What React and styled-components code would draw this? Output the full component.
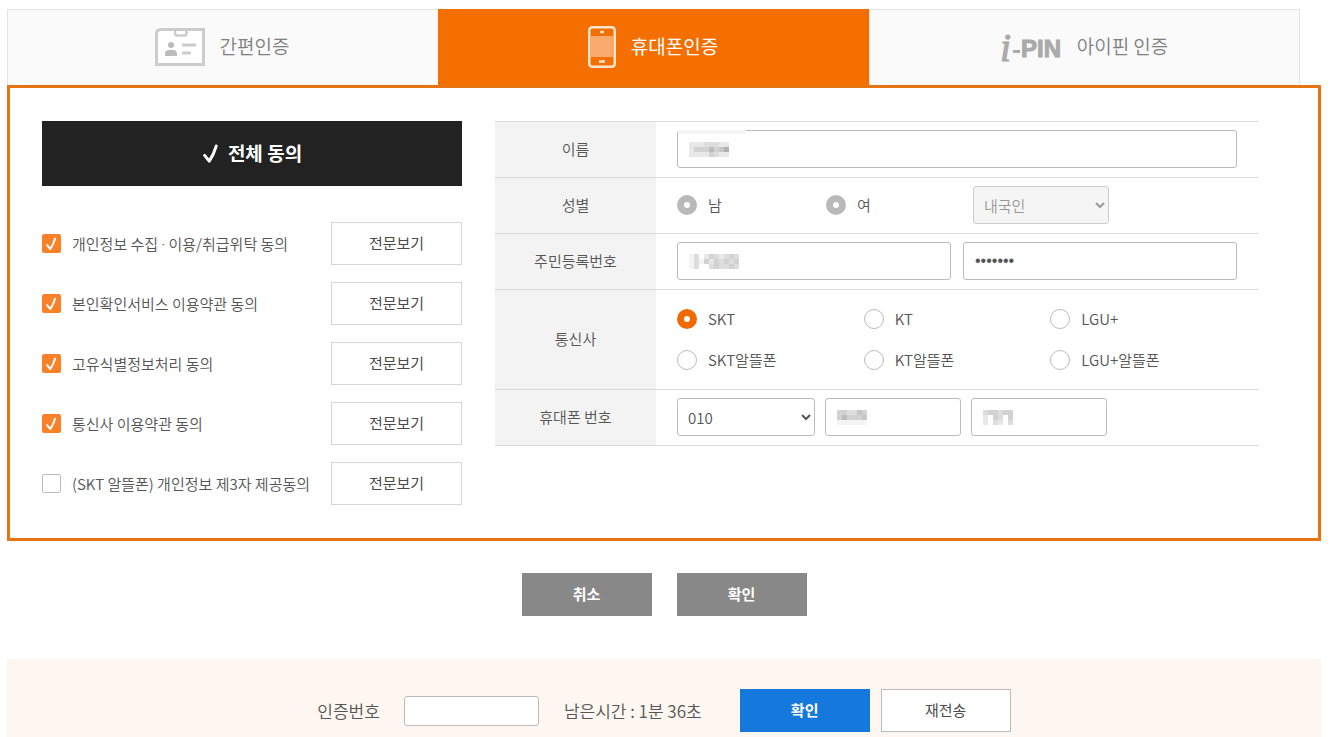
import React from 'react';
import styled, { createGlobalStyle, css } from 'styled-components';

const GlobalStyle = createGlobalStyle`
  * {
    box-sizing: border-box;
  }

  body {
    margin: 0;
    background: #fff;
    color: #555;
    font-family: 'Noto Sans CJK KR', sans-serif;
    font-size: 15px;
    font-weight: 350;
    line-height: 22px;
  }

  button,
  input,
  select {
    margin: 0;
    color: inherit;
    font-family: inherit;
    font-size: inherit;
    font-weight: inherit;
  }
`;

const Page = styled.div`
  padding: 9px 16px 0 7px;
`;

const Tabs = styled.nav`
  display: grid;
  grid-template-columns: repeat(3, 1fr);
  padding-right: 21px;
`;

const Tab = styled.button`
  display: flex;
  align-items: center;
  justify-content: center;
  gap: 15px;
  height: 76px;
  padding: 0 2px 2px 0;
  border: 1px solid #e4e4e4;
  border-width: 1px 0 0 1px;
  background: #fafafa;
  color: #808080;
  font-size: 19px;
  cursor: pointer;

  &:last-child {
    border-right-width: 1px;
  }

  ${props => props.$active && css`
    border-color: #f56e00;
    background: #f56e00;
    color: #fff;
    font-weight: 400;
  `}
`;

const TabText = styled.span`
  padding-bottom: 2px;
`;

const Panel = styled.section`
  display: flex;
  gap: 33px;
  padding: 33px 59px 33px 32px;
  border: 3px solid #e67410;
`;

const Agreements = styled.div`
  flex: 0 0 420px;
`;

const AgreeAll = styled.button`
  display: flex;
  align-items: center;
  justify-content: center;
  gap: 6px;
  width: 100%;
  height: 65px;
  padding: 0 2px 2px 0;
  border: 0;
  background: #222;
  color: #fff;
  font-size: 19px;
  font-weight: 700;
  cursor: pointer;
`;

const AgreementList = styled.ul`
  display: flex;
  flex-direction: column;
  gap: 17px;
  margin: 36px 0 0;
  padding: 0;
  list-style: none;
`;

const AgreementItem = styled.li`
  display: flex;
  align-items: center;
  justify-content: space-between;
`;

const CheckLabel = styled.label`
  display: flex;
  align-items: center;
  gap: 11px;
`;

const MiddleDot = styled.span`
  font-family: 'Noto Sans', sans-serif;
`;

const CheckWrap = styled.span`
  display: grid;
  place-items: center;

  > * {
    grid-area: 1 / 1;
  }

  > svg {
    pointer-events: none;
  }
`;

const Checkbox = styled.input`
  appearance: none;
  width: 19px;
  height: 19px;
  border: 1px solid #bbb;
  border-radius: 2px;
  background: #fff;

  &:checked {
    border-color: #fa8128;
    background: #fa8128;
  }
`;

const Button = styled.button`
  width: ${props => props.$width || 130}px;
  height: 43px;
  padding: 0 0 2px;
  border: 1px solid ${props => props.$border || props.$bg || '#d5d5d5'};
  background: ${props => props.$bg || '#fff'};
  color: ${props => (props.$bg ? '#fff' : '#4a4a4a')};
  font-weight: ${props => (props.$bg ? 700 : 400)};
  cursor: pointer;
`;

const FormTable = styled.table`
  flex: 1;
  align-self: flex-start;
  border-collapse: collapse;

  tr {
    border-top: 1px solid #dadada;
    border-bottom: 1px solid #dadada;
  }

  th {
    width: 161px;
    padding: 0 0 2px;
    background: #f3f3f3;
    font-weight: 350;
    text-align: center;
  }

  td {
    height: 56px;
    padding: 0 22px 1px 21px;
  }
`;

const FieldRow = styled.div`
  display: flex;
  align-items: center;
  gap: ${props => props.$gap || 10}px;
`;

const Field = styled.div`
  position: relative;
  display: flex;
  align-items: center;
  flex: ${props => (props.$width ? `0 0 ${props.$width}px` : '1')};
  min-width: 0;
  height: 38px;
  padding-left: 11px;
  border: 1px solid #bbb;
  border-radius: 3px;
  background: #fff;
`;

const FieldInput = styled.input`
  flex: 1;
  min-width: 0;
  height: 36px;
  padding: 0;
  border: 0;
  background: transparent;
  outline: none;

  &[type='password'] {
    font-family: 'Liberation Sans', sans-serif;
    font-size: 16px;
  }
`;

const Smudge = styled.span`
  position: absolute;
  top: -1px;
  left: 0;
  width: 68px;
  height: 4px;
  background: #f5f5f5;
`;

const Select = styled.select`
  width: ${props => props.$width}px;
  height: 38px;
  padding: 0 0 0 6px;
  border: 1px solid #bbb;
  border-radius: 3px;
  background-color: #fff;

  &:disabled {
    border-color: #ccc;
    background-color: #f5f5f5;
    color: #999;
    opacity: 1;
  }
`;

const GenderGrid = styled.div`
  display: grid;
  grid-template-columns: 149px 147px auto;
  align-items: center;
  justify-content: start;
`;

const CarrierGrid = styled.div`
  display: grid;
  grid-template-columns: repeat(3, 1fr);
  row-gap: 19px;
  padding: 18px 0 17px;
`;

const RadioLabel = styled.label`
  display: flex;
  align-items: center;
  gap: 11px;
`;

const Radio = styled.input`
  appearance: none;
  width: 20px;
  height: 20px;
  border: 1px solid #bbb;
  border-radius: 50%;
  background: #fff;

  &:checked {
    border: 7px solid #f06a00;
  }

  &:disabled {
    border: 7px solid #b9b9b9;
  }
`;

const Actions = styled.div`
  display: flex;
  justify-content: center;
  gap: 25px;
  padding: 32px 0 43px;
`;

const VerifyBar = styled.section`
  display: flex;
  align-items: center;
  justify-content: center;
  padding: 30px 0 5px;
  background: #fef6f0;
  font-size: 17px;
`;

const CodeLabel = styled.label`
  margin-right: 24px;
`;

const CodeInput = styled.input`
  width: 135px;
  height: 30px;
  padding: 0 8px;
  border: 1px solid #bbb;
  border-radius: 3px;
  background: #fff;
`;

const TimeLeft = styled.span`
  margin: 0 38px 0 25px;
`;

const VerifyButtons = styled.div`
  display: flex;
  gap: 11px;
  font-size: 15px;
`;

const IdCardIcon = () => (
  <svg width="50" height="38" viewBox="0 0 50 38" fill="none">
    <path d="M6 1.5H48.5V36.5H1.5V6Q1.5 1.5 6 1.5Z" fill="#fff" stroke="#ccc" strokeWidth="3" />
    <path d="M20 2V5.5Q20 7.5 22 7.5H29.5Q31.5 7.5 31.5 5.5V2" stroke="#ccc" strokeWidth="2.5" />
    <circle cx="16" cy="17" r="3" fill="#bbb" />
    <path d="M10 28V26Q10 22 14 22H18Q22 22 22 26V28Z" fill="#bbb" />
    <path d="M27 17H41M27 25H36" stroke="#ccc" strokeWidth="3" />
  </svg>
);

const PhoneIcon = () => (
  <svg width="28" height="42" viewBox="0 0 28 42" fill="none">
    <rect x="1.25" y="1.25" width="25.5" height="39.5" rx="3" stroke="#ffe6cf" strokeWidth="2.5" />
    <rect x="2.5" y="10" width="23" height="21" fill="#f9aa6c" />
    <path d="M12 6H16M11 35.5H17" stroke="#ffe6cf" strokeWidth="2.5" />
  </svg>
);

const IpinLogo = () => (
  <svg width="63" height="54" viewBox="0 0 63 54" fill="#aaa">
    <text x="1" y="41" fontFamily="Liberation Serif, serif" fontSize="40" fontStyle="italic" stroke="#aaa">i</text>
    <rect x="14" y="30" width="7" height="3" />
    <text x="22" y="37" fontFamily="Liberation Sans, sans-serif" fontSize="24" fontWeight="700" stroke="#aaa">PIN</text>
  </svg>
);

const CheckMark = ({ size }) => (
  <svg width={size} height={size} viewBox="0 0 19 19" fill="none">
    <path
      d="M4 11.5L8 16.5Q12 10.5 14 3.5"
      stroke="#fff"
      strokeWidth="2.6"
      strokeLinecap="round"
      strokeLinejoin="round"
    />
  </svg>
);

// Pixelated stand-in for a hidden value, one string per row of cells, 0 (clear) to 9 (dark)
const Mosaic = ({ rows, cell }) => (
  <svg width={rows[0].length * cell} height={rows.length * cell} shapeRendering="crispEdges">
    {rows.map((row, y) =>
      row.split('').map((shade, x) => (
        <rect
          key={`${x}-${y}`}
          x={x * cell}
          y={y * cell}
          width={cell}
          height={cell}
          fill="#777"
          opacity={shade / 12}
        />
      ))
    )}
  </svg>
);

const agreements = [
  { text: <span>개인정보 수집 <MiddleDot>·</MiddleDot> 이용/취급위탁 동의</span>, checked: true },
  { text: '본인확인서비스 이용약관 동의', checked: true },
  { text: '고유식별정보처리 동의', checked: true },
  { text: '통신사 이용약관 동의', checked: true },
  { text: '(SKT 알뜰폰) 개인정보 제3자 제공동의', checked: false },
];

const carriers = ['SKT', 'KT', 'LGU+', 'SKT알뜰폰', 'KT알뜰폰', 'LGU+알뜰폰'];

const App = () => {
  return (
    <>
      <GlobalStyle />
      <Page>
        <Tabs>
          <Tab type="button"><IdCardIcon /><TabText>간편인증</TabText></Tab>
          <Tab type="button" $active><PhoneIcon /><TabText>휴대폰인증</TabText></Tab>
          <Tab type="button"><IpinLogo /><TabText>아이핀 인증</TabText></Tab>
        </Tabs>
        <Panel>
          <Agreements>
            <AgreeAll type="button"><CheckMark size={22} />전체 동의</AgreeAll>
            <AgreementList>
              {agreements.map((item, index) => (
                <AgreementItem key={index}>
                  <CheckLabel>
                    <CheckWrap>
                      <Checkbox type="checkbox" defaultChecked={item.checked} />
                      {item.checked && <CheckMark size={15} />}
                    </CheckWrap>
                    {item.text}
                  </CheckLabel>
                  <Button type="button" $width={131}>전문보기</Button>
                </AgreementItem>
              ))}
            </AgreementList>
          </Agreements>
          <FormTable>
            <tbody>
              <tr>
                <th scope="row"><label htmlFor="name">이름</label></th>
                <td>
                  <Field>
                    <Smudge />
                    <Mosaic cell={5} rows={['22233322', '24446457', '22224322']} />
                    <FieldInput id="name" type="text" />
                  </Field>
                </td>
              </tr>
              <tr>
                <th scope="row">성별</th>
                <td>
                  <GenderGrid>
                    <RadioLabel><Radio type="radio" name="gender" disabled />남</RadioLabel>
                    <RadioLabel><Radio type="radio" name="gender" disabled />여</RadioLabel>
                    <Select $width={136} aria-label="내외국인" disabled>
                      <option>내국인</option>
                    </Select>
                  </GenderGrid>
                </td>
              </tr>
              <tr>
                <th scope="row"><label htmlFor="rrn">주민등록번호</label></th>
                <td>
                  <FieldRow $gap={12}>
                    <Field>
                      <Mosaic cell={5} rows={['1302432343', '1314243434', '1300343343']} />
                      <FieldInput id="rrn" type="text" />
                    </Field>
                    <Field>
                      <FieldInput type="password" defaultValue="0000000" aria-label="주민등록번호 뒷자리" />
                    </Field>
                  </FieldRow>
                </td>
              </tr>
              <tr>
                <th scope="row">통신사</th>
                <td>
                  <CarrierGrid>
                    {carriers.map((name, index) => (
                      <RadioLabel key={name}>
                        <Radio type="radio" name="carrier" defaultChecked={index === 0} />
                        {name}
                      </RadioLabel>
                    ))}
                  </CarrierGrid>
                </td>
              </tr>
              <tr>
                <th scope="row"><label htmlFor="phone">휴대폰 번호</label></th>
                <td>
                  <FieldRow>
                    <Select id="phone" $width={138}>
                      <option>010</option>
                    </Select>
                    <Field $width={136}>
                      <Mosaic cell={5} rows={['443354', '464445', '111111']} />
                      <FieldInput type="text" aria-label="휴대폰 번호 가운데 자리" />
                    </Field>
                    <Field $width={136}>
                      <Mosaic cell={5} rows={['344344', '204304', '203203']} />
                      <FieldInput type="text" aria-label="휴대폰 번호 끝자리" />
                    </Field>
                  </FieldRow>
                </td>
              </tr>
            </tbody>
          </FormTable>
        </Panel>
        <Actions>
          <Button type="button" $bg="#888">취소</Button>
          <Button type="button" $bg="#888">확인</Button>
        </Actions>
        <VerifyBar>
          <CodeLabel htmlFor="code">인증번호</CodeLabel>
          <CodeInput id="code" type="text" />
          <TimeLeft>남은시간 : 1분 36초</TimeLeft>
          <VerifyButtons>
            <Button type="button" $bg="#1478dc">확인</Button>
            <Button type="button" $border="#bbb">재전송</Button>
          </VerifyButtons>
        </VerifyBar>
      </Page>
    </>
  );
};

export default App;
